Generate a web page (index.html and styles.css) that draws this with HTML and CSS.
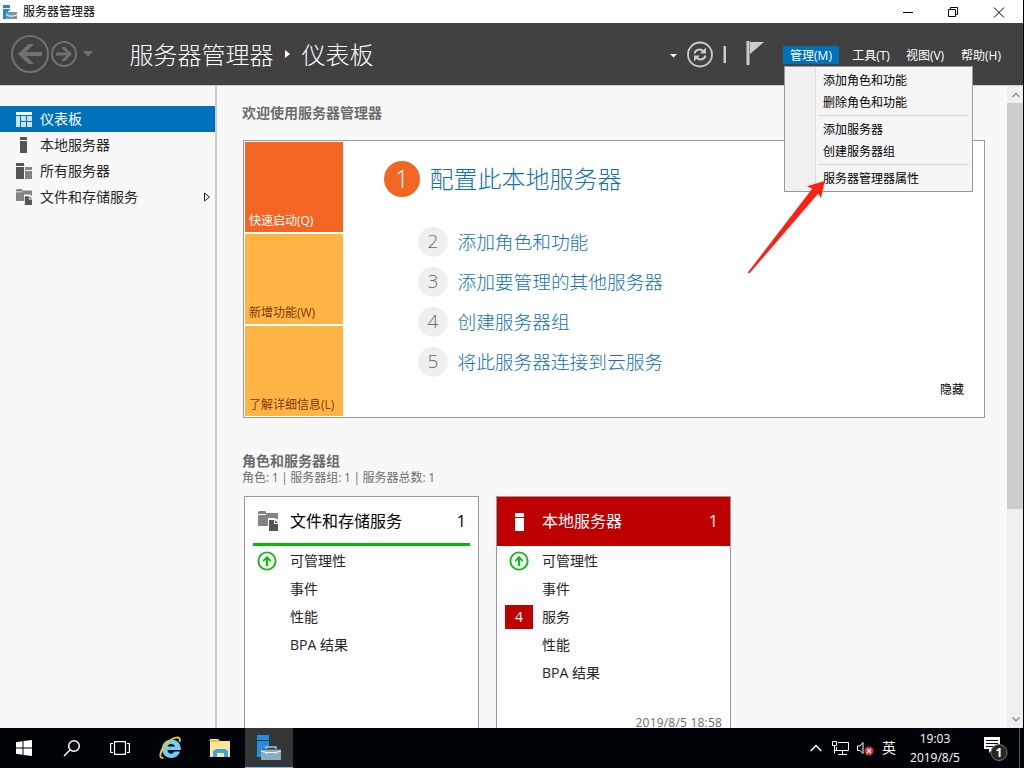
FILE: index.html
```html
<!DOCTYPE html>
<html lang="zh-CN">
<head>
<meta charset="utf-8">
<title>服务器管理器</title>
<link rel="stylesheet" href="styles.css">
</head>
<body>
<svg class="defs" width="0" height="0">
  <symbol id="server" viewBox="0 0 16 16"><path d="M4 0h7v3H4zM4 4h7v12H4z"/></symbol>
  <symbol id="server-large" viewBox="0 0 20 18"><path d="M6 0h9v4H6zM6 5h9v13H6z"/></symbol>
  <symbol id="storage" viewBox="0 0 20 20"><path d="M0 1l1-1h6l1 1v2H0zM8 2h12v6H8zM0 4h9v11H0zM9 4h2v11H9z" fill="#838383"/><path d="M10 7h7l4 4v10H10z" fill="#fafafa"/><path d="M11 9h5v4h4v7h-9zM17 9l3 3h-3z" fill="#555"/></symbol>
  <symbol id="up" viewBox="0 0 20 20"><circle cx="10" cy="10" r="8.6" fill="none" stroke="#0ebd0e" stroke-width="1.9"/><path d="M10 4.700l4 4.200v2L11.200 9v6H8.800V9L6 10.900v-2z" fill="#0ebd0e"/></symbol>
</svg>
<div class="screen">
  <div class="titlebar">
    <svg class="app-icon" width="14" height="14" viewBox="0 0 14 14"><path d="M0 0h7v3H0zM0 4h7v2L3 8v6H0z" fill="#1d8ddb"/><path d="M3 7h11v7H3z" fill="#7695aa"/><path d="M5.500 8V6h6v2M3 9.500l3 1.500h5l3-1.500" fill="none" stroke="#fff"/><path d="M5 7.500h7" stroke="#7695aa"/></svg>
    <span class="app-name">服务器管理器</span>
    <svg class="window-buttons" width="112" height="20" viewBox="0 0 112 20" fill="none" stroke="#000"><path d="M3 10.500h10M48.500 7.500h7v7h-7zM50.500 7V5.500h7v7H56M94 5.500l10 10M104 5.500l-10 10"/></svg>
  </div>
  <header class="header">
    <svg class="nav-buttons" width="84" height="40" viewBox="0 0 84 40" fill="none" stroke="#717171"><circle cx="20" cy="20" r="18" stroke-width="2"/><path d="M32 20H11" stroke-width="4"/><path d="M8 20L18.500 10H24L14 20l10 10h-5.500z" fill="#717171" stroke="none"/><circle cx="54" cy="20" r="12" stroke-width="2"/><path d="M46 20h14" stroke-width="3"/><path d="M62 20l-7-7h-4l7 7-7 7h4z" fill="#717171" stroke="none"/><path d="M73 17h10l-5 6z" fill="#717171" stroke="none"/></svg>
    <h1 class="crumbs"><span>服务器管理器</span><svg width="5" height="8"><path d="M0 0l5 4-5 4z" fill="#fff"/></svg><span>仪表板</span></h1>
    <svg class="tools" width="96" height="34" viewBox="0 0 96 34" fill="none"><path d="M0 17h7l-3.500 3.500z" fill="#fff"/><circle cx="30" cy="17.500" r="12" stroke="#ccc" stroke-width="1.800"/><path d="M24.500 16.500c1-4 6-5.500 9-2M35.500 18.500c-1 4-6 5.500-9 2" stroke="#ccc" stroke-width="2"/><path d="M36 10.500v6h-6zM24 24.500v-6h6z" fill="#ccc"/><path d="M53.500 9H56v17h-2.500zM76.500 4h3v24h-3zM80 5h14L80 17z" fill="#ccc"/></svg>
    <nav class="menubar">
      <span class="menu-title active">管理(M)</span><span class="menu-title">工具(T)</span><span class="menu-title">视图(V)</span><span class="menu-title">帮助(H)</span>
    </nav>
  </header>
  <div class="body">
    <aside class="sidebar">
      <div class="side-item selected"><svg width="16" height="15" viewBox="0 0 16 15"><path d="M0 0h16v3H0z" fill="#fff"/><path d="M0 4h4v11H0zM5 4h5v5H5zM11 4h5v5h-5zM5 10h5v5H5zM11 10h5v5h-5z" fill="#c9e3f5"/></svg><span>仪表板</span></div>
      <div class="side-item"><svg width="16" height="16" fill="#555"><use href="#server"/></svg><span>本地服务器</span></div>
      <div class="side-item"><svg width="16" height="16" viewBox="0 0 16 16" fill="#555"><path d="M0 0h8v3H0zM0 4h8v12H0z"/><path d="M9 4h7v3H9zM9 8h7v8H9z" fill="#838383"/></svg><span>所有服务器</span></div>
      <div class="side-item"><svg width="16" height="16"><use href="#storage"/></svg><span>文件和存储服务</span><svg class="expand" width="8" height="10" viewBox="0 0 8 10"><path d="M1.500 1l5 4-5 4z" fill="none" stroke="#222"/></svg></div>
    </aside>
    <main class="main">
      <h2 class="section-title">欢迎使用服务器管理器</h2>
      <section class="welcome">
        <div class="tiles">
          <div class="tile primary">快速启动(Q)</div><div class="tile">新增功能(W)</div><div class="tile">了解详细信息(L)</div>
        </div>
        <div class="steps">
          <div class="step first"><b>1</b><span>配置此本地服务器</span></div>
          <div class="step"><b>2</b><span>添加角色和功能</span></div>
          <div class="step"><b>3</b><span>添加要管理的其他服务器</span></div>
          <div class="step"><b>4</b><span>创建服务器组</span></div>
          <div class="step"><b>5</b><span>将此服务器连接到云服务</span></div>
        </div>
        <span class="hide-link">隐藏</span>
      </section>
      <h2 class="section-title roles">角色和服务器组</h2>
      <p class="summary">角色: 1 | 服务器组: 1 | 服务器总数: 1</p>
      <div class="cards">
        <article class="card">
          <div class="card-head healthy"><svg width="20" height="20"><use href="#storage"/></svg><span>文件和存储服务</span><span class="count">1</span></div>
          <div class="card-row"><i><svg width="20" height="20"><use href="#up"/></svg></i>可管理性</div>
          <div class="card-row"><i></i>事件</div>
          <div class="card-row"><i></i>性能</div>
          <div class="card-row"><i></i>BPA 结果</div>
        </article>
        <article class="card">
          <div class="card-head alert"><svg width="20" height="18" fill="#fff"><use href="#server-large"/></svg><span>本地服务器</span><span class="count">1</span></div>
          <div class="card-row"><i><svg width="20" height="20"><use href="#up"/></svg></i>可管理性</div>
          <div class="card-row"><i></i>事件</div>
          <div class="card-row"><i class="badge">4</i>服务</div>
          <div class="card-row"><i></i>性能</div>
          <div class="card-row"><i></i>BPA 结果</div>
          <div class="stamp">2019/8/5 18:58</div>
        </article>
      </div>
    </main>
    <div class="scrollbar"><svg width="16" height="17" fill="none" stroke="#8e8e8e" stroke-width="1.500"><path d="M5.500 11L9 7.500l3.500 3.500"/></svg><div class="thumb"></div><svg class="down" width="16" height="17" fill="none" stroke="#8e8e8e" stroke-width="1.500"><path d="M5.500 6.500L9 10l3.500-3.500"/></svg></div>
  </div>
  <footer class="taskbar">
    <div class="task"><svg width="16" height="16" fill="#fff"><path d="M0 2.200l6.500-.9v6.200H0zM7.500 1.100L16 0v7.500H7.500zM0 8.500h6.500v6.200L0 13.800zM7.500 8.500H16V16l-8.500-1.100z"/></svg></div>
    <div class="task"><svg width="18" height="18" fill="none" stroke="#fff" stroke-width="1.500"><circle cx="11" cy="7" r="5.300"/><path d="M7 11l-6 6"/></svg></div>
    <div class="task"><svg width="20" height="14" fill="none" stroke="#fff" stroke-width="1.200"><path d="M4.500.6h11v12.800h-11zM3 2.500H.6v9H3M17 2.500h2.400v9H17"/></svg></div>
    <div class="task ie"><svg width="24" height="24" viewBox="0 0 24 24" fill="none"><path d="M21 15.500c-1.500 4.500-5 6.500-8.700 6.500-5.300 0-9.300-4-9.300-9.300s4-9.300 9.300-9.300c6.200 0 9.700 4.300 9.700 10.600H8.500c.5 4.500 5 5 6.800 1.500z" fill="#6bd0fa"/><path d="M8.500 10.500c.5-3.500 7-3.500 7.500 0z" fill="#000307"/><path d="M4.500 21.500C-1 24 1 14 8 7c6-6 15-8 12.500-1" stroke="#f4c51c" stroke-width="1.900"/></svg></div>
    <div class="task explorer"><svg width="22" height="19" viewBox="0 0 22 19"><path d="M1 0h8l2 2h10v16H1z" fill="#ffe594"/><path d="M0 1h9l2 2H1z" fill="#e9b944"/><path d="M4 18v-6l3-2h9l3 2v6h-4v-4H8v4z" fill="#34a6e1"/></svg></div>
    <div class="task open"><svg width="24" height="25" viewBox="0 0 24 25"><path d="M0 0h12v5H0zM0 6h12v7l-7 1v8H0z" fill="#2090df"/><path d="M4 14.500h20V25H4z" fill="#8cabbe"/><path d="M9 14v-2h10v2" fill="none" stroke="#a9c4d4" stroke-width="1.500"/><path d="M4 16l5 1.500h10l5-1.500M9 16.500V19M19 16.500V19" fill="none" stroke="#e9f4f9"/></svg></div>
    <div class="tray">
      <svg class="caret" width="12" height="8" fill="none" stroke="#fff" stroke-width="1.400"><path d="M.7 7L6 1.500 11.300 7"/></svg>
      <svg class="network" width="17" height="14" fill="none" stroke="#fff"><path d="M6 1.500h10.500v8h-12V6M.500.500h4v4h-4zM2.500 5v7.500M10.500 10v3M6 13.500h9M2.500 9.500H6"/></svg>
      <svg class="volume" width="17" height="15"><path d="M.5 5h2.500l3-3.500v11L3 9.500H.500z" fill="none" stroke="#fff"/><circle cx="12" cy="10" r="4.500" fill="#e32935"/><path d="M10 8l4 4M14 8l-4 4" stroke="#fff" stroke-width="1.300"/></svg>
      <span class="ime">英</span>
      <div class="clock"><span>19:03</span><span>2019/8/5</span></div>
      <svg class="notice" width="26" height="26"><path d="M2 2h16v12h-7l-4 4v-4H2z" fill="#fff"/><path d="M4 5.500h12M4 8.500h12M4 11.500h7" stroke="#000307"/><circle cx="17" cy="17.500" r="8" fill="#252525" stroke="#777"/><text x="17" y="22" text-anchor="middle" class="notice-count">1</text></svg>
      <span class="show-desktop"></span>
    </div>
  </footer>
  <div class="dropdown">
    <div class="option">添加角色和功能</div><div class="option">删除角色和功能</div><hr>
    <div class="option">添加服务器</div><div class="option">创建服务器组</div><hr>
    <div class="option">服务器管理器属性</div>
  </div>
  <svg class="pointer" width="80" height="95" viewBox="0 0 80 95"><path d="M79.700 1L62 6.300l5.200 2.500L2.800 92.500l1.600 1L73.200 13.500 76 18.300z" fill="#ff2015"/></svg>
</div>
</body>
</html>
```
FILE: styles.css
```css
* { box-sizing: border-box; }
body { margin: 0; font-family: "Open Sans", "Noto Sans CJK SC", sans-serif; font-size: 12px; color: #000; }
svg { display: block; flex: none; }
.defs { position: absolute; }
.screen { position: relative; width: 1024px; height: 768px; overflow: hidden; display: flex; flex-direction: column; background: #f8f8f8; border-right: 1px solid #000; }
.titlebar { height: 23px; flex: none; background: #fff; display: flex; align-items: center; padding-left: 3px; }
.app-icon { margin-right: 6px; }
.app-name { line-height: 20px; }
.window-buttons { margin-left: auto; margin-right: 11px; }
.header { height: 63px; flex: none; background: #414141; border-bottom: 1px solid #cfcfcf; display: flex; align-items: center; color: #fff; padding-left: 10px; }
.crumbs { font-size: 24px; font-weight: 300; line-height: 36px; margin: 2px 0 0 35.500px; display: flex; align-items: center; gap: 11.500px; width: 540px; }
.crumbs svg { margin-bottom: 2px; }
.tools { margin-bottom: 1px; }
.menubar { display: flex; align-items: center; margin: 1px 0 0 17.500px; gap: 3px; }
.menu-title { height: 18px; line-height: 19px; width: 52px; text-align: center; white-space: nowrap; }
.menu-title.active { width: 56px; background: #0070bb; margin-right: 3px; }
.menu-title + .menu-title:nth-child(3) { margin-left: -1px; }
.menu-title:last-child { margin-left: 1px; }
.body { height: 642px; flex: none; display: flex; }
.sidebar { width: 217px; flex: none; border-right: 2px solid #ccc; padding-top: 20px; }
.side-item { height: 26px; display: flex; align-items: center; padding: 0 4px 0 16px; gap: 8px; font-size: 14px; line-height: 20px; color: #262626; }
.side-item.selected { background: #0072bc; color: #fff; }
.expand { margin-left: auto; }
.main { flex: 1; padding: 17px 0 0 26px; overflow: hidden; }
.section-title { margin: 0; font-size: 14px; line-height: 20px; font-weight: 700; color: #6c6c6c; margin-left: -1px; }
.welcome { margin: 17px 0 0; width: 742px; height: 278px; border: 1px solid #999; background: #fff; display: flex; padding: 1px; }
.tiles { width: 98px; display: flex; flex-direction: column; gap: 2px; }
.tile { height: 90px; background: #ffb444; color: #7c3a10; display: flex; align-items: flex-end; padding: 0 0 2px 4px; line-height: 18px; white-space: nowrap; }
.tile.primary { background: #f36523; color: #fff; }
.steps { margin-left: 41px; padding-top: 19px; flex: 1; }
.step { height: 40px; display: flex; align-items: center; padding-left: 34px; gap: 9.500px; font-size: 18.700px; font-weight: 300; color: #0f70b8; }
.step span { padding-bottom: 4px; }
.step b { width: 30px; height: 30px; line-height: 29px; border-radius: 50%; text-align: center; background: #efefef; color: #6c6c6c; font-weight: 300; font-size: 19px; }
.step.first { height: 36px; margin-bottom: 25px; padding-left: 0; font-size: 24px; }
.step.first span { padding-bottom: 3px; }
.step.first b { width: 36px; height: 36px; line-height: 35px; background: #f36523; color: #fff; font-size: 25px; }
.hide-link { align-self: flex-end; margin: 0 19px 17px 0; line-height: 18px; }
.section-title.roles { margin-top: 33px; }
.summary { margin: 0 0 0 -1px; line-height: 14px; color: #6c6c6c; word-spacing: -0.550px; }
.cards { margin: 11px 0 0 1px; display: flex; gap: 17px; }
.card { width: 235px; height: 240px; border: 1px solid #999; background: #fdfdfd; }
.card-head { height: 49px; display: flex; align-items: center; font-size: 16px; line-height: 24px; margin-bottom: 1px; }
.card-head span { padding-bottom: 2px; }
.card-head.healthy { margin: 0 8px 1px; padding: 3px 4px 0 5px; border-bottom: 3px solid #00bf00; gap: 12px; }
.card-head.healthy svg { margin-bottom: 2px; }
.card-head.alert { background: #bf0000; color: #fff; padding: 0 12px; gap: 13px; }
.card-head .count { margin-left: auto; }
.card-row { height: 28px; display: flex; align-items: center; gap: 9px; padding-left: 8px; font-size: 14px; line-height: 20px; color: #262626; }
.card-row i { width: 28px; height: 24px; font-style: normal; display: flex; align-items: center; justify-content: center; }
.card-row svg { margin-right: 1px; }
.card-row .badge { background: #bf0000; color: #fff; }
.stamp { text-align: right; margin: 27px 8px 0 0; line-height: 18px; color: #6c6c6c; letter-spacing: .2px; }
.scrollbar { width: 16px; background: #f0f0f0; display: flex; flex-direction: column; }
.thumb { height: 406px; background: #cdcdcd; }
.scrollbar .down { margin-top: auto; }
.taskbar { height: 40px; flex: none; background: #000307; display: flex; color: #fff; }
.task { width: 48px; display: flex; align-items: center; justify-content: center; }
.task.ie { margin-left: 3px; }
.task.explorer { margin-left: 1px; }
.task.open { background: #333537; border-bottom: 1px solid #76b9ed; margin-left: 1px; }
.tray { margin-left: auto; display: flex; align-items: center; }
.caret { margin-right: 10px; }
.network { margin-right: 8px; }
.volume { margin-right: 8px; }
.ime { font-size: 14px; line-height: 20px; margin-right: 13px; }
.clock { width: 52px; text-align: center; display: flex; flex-direction: column; line-height: 19px; margin-right: 21px; }
.notice { margin-right: 11px; }
.notice-count { font-size: 12px; font-weight: 700; fill: #fff; }
.show-desktop { width: 4px; height: 40px; border-left: 1px solid #555; }
.dropdown { position: absolute; left: 784px; top: 66px; width: 189px; height: 126px; border: 1px solid #999; background: linear-gradient(90deg, #f0f0f0 0 30px, #ddd 30px 31px, #f5f5f5 31px); padding: 3px 3px 0 33px; }
.option { height: 22px; line-height: 22px; padding-left: 5px; }
.dropdown hr { height: 1px; border: 0; background: #d7d7d7; margin: 1px 0 3px; }
.pointer { position: absolute; left: 745px; top: 180px; }
```
